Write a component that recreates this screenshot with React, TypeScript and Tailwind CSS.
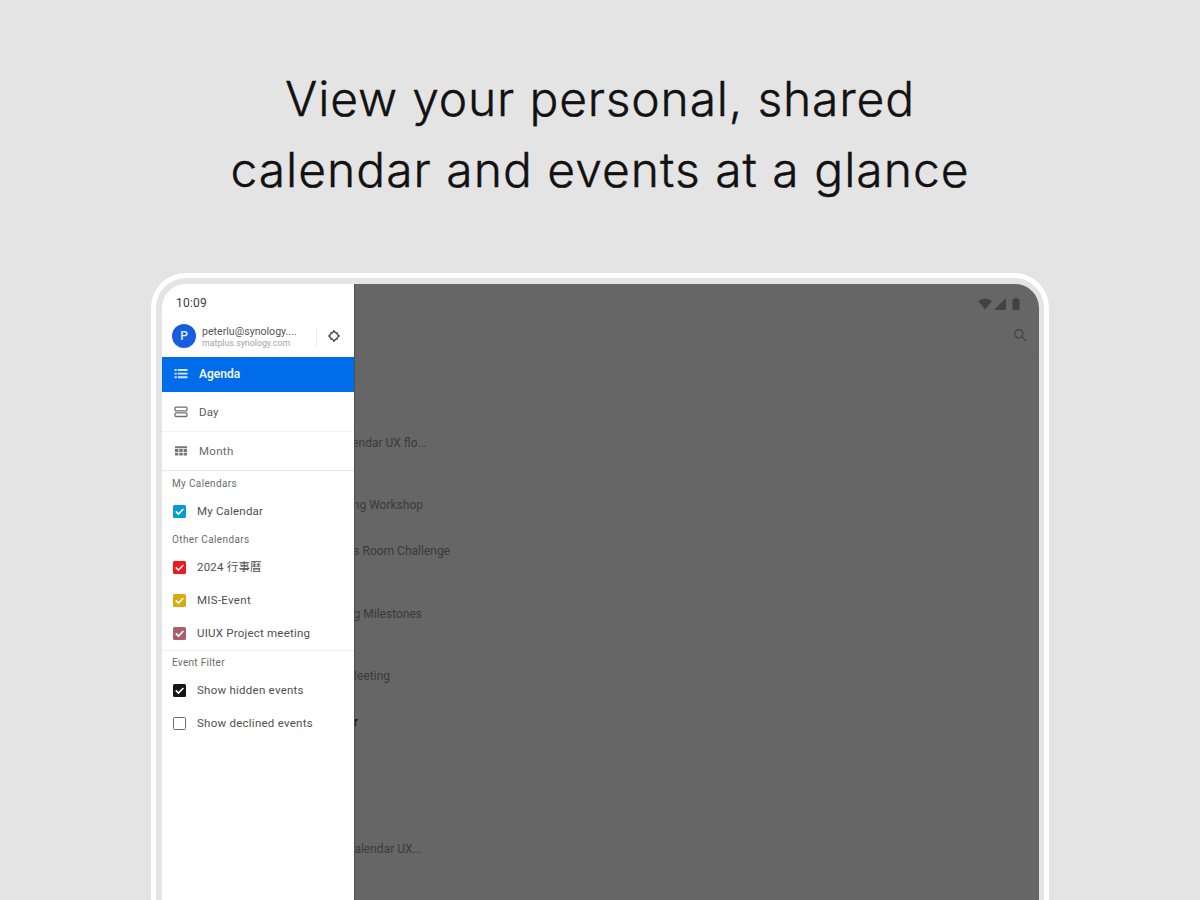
import React from "react";

type Calendar = { name: string; box: string; text: string };

const others: Calendar[] = [
  { name: "2024 行事曆", box: "bg-[#f3161c]", text: "tracking-[0.2px]" },
  { name: "MIS-Event", box: "bg-[#d9ab0c]", text: "tracking-[0.3px]" },
  { name: "UIUX Project meeting", box: "bg-[#a8616a]", text: "tracking-[0.22px]" },
];

function CheckBox({ color }: { color: string }) {
  return (
    <span className={`-mt-px flex size-[13px] shrink-0 items-center justify-center rounded-[1.5px] ${color}`}>
      <svg viewBox="0 0 13 13" className="size-[13px]" fill="none" stroke="white" strokeWidth="1.6">
        <path d="M2.8 6.4 5.4 9 10.4 4" />
      </svg>
    </span>
  );
}

function CheckRow({ item }: { item: Calendar }) {
  return (
    <div className="flex h-[33px] items-center pl-[11px]">
      <CheckBox color={item.box} />
      <span className={`ml-[11px] text-[11.5px] whitespace-nowrap text-[#505050] ${item.text}`}>{item.name}</span>
    </div>
  );
}

function SectionTitle({ children, className }: { children: string; className: string }) {
  return (
    <div className={`flex items-center pl-[10px] text-[10px] text-[#6b6b6b] ${className}`}>{children}</div>
  );
}

function Drawer() {
  return (
    <aside className="flex w-[192px] shrink-0 flex-col bg-white">
      <div className="flex h-[35px] items-center pt-[3px] pl-[14px] text-[12px] tracking-[0.2px] text-[#404040]">10:09</div>
      <div className="flex h-[38px] items-center pl-[10px]">
        <span className="-mt-[4px] flex size-[24px] shrink-0 items-center justify-center rounded-full bg-[#155fdf] text-[12px] font-medium text-[#e4eeff]">
          P
        </span>
        <div className="-mt-[3px] ml-[6px] w-[114px] whitespace-nowrap">
          <div className="text-[10.6px] leading-[12px] text-[#555]">peterlu@synology....</div>
          <div className="text-[8.8px] leading-[10px] text-[#a3a3a3]">matplus.synology.com</div>
        </div>
        <span className="-mt-[2px] h-[18px] w-px bg-[#eee]" />
        <svg viewBox="0 0 14 14" className="-mt-[4px] ml-[10px] size-[14px]" fill="none" stroke="#3c3c3c" strokeWidth="1.3">
          <path d="M7 1.8 8.7 3.9H10.1V5.3L12.2 7 10.1 8.7V10.1H8.7L7 12.2 5.3 10.1H3.9V8.7L1.8 7 3.9 5.3V3.9H5.3z" />
        </svg>
      </div>
      <div className="flex h-[35px] items-center bg-[#006ce9] pl-[12px] text-[#f0f6ff]">
        <svg viewBox="0 0 14 12" className="-mt-px w-[14px]" stroke="#d5e7ff" strokeWidth="1.9">
          <path d="M0.5 2h2.2M3.7 2H13.5M0.5 5.6h2.2M3.7 5.6H13.5M0.5 9.2h2.2M3.7 9.2H13.5" />
        </svg>
        <span className="-mt-[2px] ml-[11px] text-[12px] font-semibold">Agenda</span>
      </div>
      <div className="flex h-[40px] items-center border-b border-[#f3f3f3] pl-[12px]">
        <svg viewBox="0 0 14 12" className="w-[14px]" fill="none" stroke="#707070" strokeWidth="1.3">
          <rect x="1" y="1.2" width="12" height="3.7" rx="1" />
          <rect x="1" y="6.8" width="12" height="3.7" rx="1" />
        </svg>
        <span className="mt-[2px] ml-[11px] text-[11.5px] tracking-[0.2px] text-[#5a5a5a]">Day</span>
      </div>
      <div className="flex h-[39px] items-center border-b border-[#e9e9e9] pl-[12px]">
        <svg viewBox="0 0 14 12" className="w-[14px]" fill="#777">
          <path d="M1 1.2h12v2H1zM1 4h3.4v2.9H1zM5.3 4h3.4v2.9H5.3zM9.6 4H13v2.9H9.6zM1 7.8h3.4v2.7H1zM5.3 7.8h3.4v2.7H5.3zM9.6 7.8H13v2.7H9.6z" />
        </svg>
        <span className="mt-[2px] ml-[11px] text-[11.5px] tracking-[0.3px] text-[#6b6b6b]">Month</span>
      </div>
      <SectionTitle className="h-[24px] tracking-[0.35px]">My Calendars</SectionTitle>
      <CheckRow item={{ name: "My Calendar", box: "bg-[#079bd6]", text: "tracking-[0.2px]" }} />
      <SectionTitle className="h-[23px] tracking-[0.4px]">Other Calendars</SectionTitle>
      {others.map((item) => (
        <CheckRow key={item.name} item={item} />
      ))}
      <div className="border-t border-[#eee]" />
      <SectionTitle className="h-[23px] tracking-[0.3px]">Event Filter</SectionTitle>
      <CheckRow item={{ name: "Show hidden events", box: "bg-[#161616]", text: "tracking-[0.25px]" }} />
      <div className="flex h-[33px] items-center pl-[11px]">
        <span className="-mt-px size-[13px] rounded-[1.5px] border-[1.5px] border-[#6b6b6b]" />
        <span className="ml-[11px] text-[11.5px] tracking-[0.25px] whitespace-nowrap text-[#505050]">Show declined events</span>
      </div>
    </aside>
  );
}

function EventText({ children, className }: { children: string; className: string }) {
  return (
    <div className={`flex items-center justify-end text-[12px] whitespace-nowrap ${className}`}>
      {children}
    </div>
  );
}

function DimmedAgenda() {
  return (
    <main className="flex min-w-0 flex-1 flex-col overflow-hidden border-l border-[#505050] bg-[#666] text-[#3a3a3a]">
      <div className="flex h-[40px] items-center justify-end gap-[2px] pr-[19px]">
        <svg viewBox="0 0 14 12" className="w-[14px]" fill="#424242">
          <path d="M0 3Q7-2 14 3L7 11.5z" />
        </svg>
        <svg viewBox="0 0 12 12" className="w-[12px]" fill="#424242">
          <path d="M12 0v12H0z" />
        </svg>
        <svg viewBox="0 0 8 12" className="ml-[4px] w-[8px]" fill="#424242">
          <path d="M0.5 1H2.5V0h3v1h2v11h-7z" />
        </svg>
      </div>
      <div className="flex h-[32px] justify-end border-b border-[#636363] pt-[4px] pr-[12px]">
        <svg viewBox="0 0 14 14" className="size-[14px]" fill="none" stroke="#454545" strokeWidth="1.4">
          <circle cx="5.8" cy="5.8" r="4.1" />
          <path d="m9 9 4 4" />
        </svg>
      </div>
      <EventText className="mt-[71px] h-[32px] w-[72px]">endar UX flo...</EventText>
      <EventText className="mt-[30px] h-[32px] w-[68px]">ng Workshop</EventText>
      <EventText className="mt-[14px] h-[32px] w-[95px]">s Room Challenge</EventText>
      <EventText className="mt-[31px] h-[32px] w-[67px]">g Milestones</EventText>
      <EventText className="mt-[30px] h-[32px] w-[35px]">Meeting</EventText>
      <EventText className="mt-[14px] h-[32px] w-[3px] font-bold text-[#151515]">r</EventText>
      <div className="mt-[33px] ml-[331px] h-px w-[275px] bg-[#626262]" />
      <EventText className="mt-[61px] h-[32px] w-[67px]">alendar UX...</EventText>
    </main>
  );
}

export default function App() {
  return (
    <div className="flex h-[900px] w-[1200px] flex-col items-center overflow-hidden bg-[#e4e4e4] font-[Roboto,'Noto_Sans_CJK_TC',sans-serif]">
      <h1 className="mt-[63px] h-[210px] shrink-0 text-center font-[Inter,sans-serif] text-[48px] leading-[71px] font-light whitespace-nowrap text-[#111] [-webkit-text-stroke:0.4px_#111]">
        <span className="tracking-[0.8px]">View your personal, shared</span>
        <br />
        <span className="tracking-[1px]">calendar and events at a glance</span>
      </h1>
      <div className="h-[700px] w-[898px] shrink-0 rounded-[35px] border-[5px] border-white bg-[#e4e4e4] pt-[6px] pr-[5px] pl-[6px]">
        <div className="flex h-[680px] overflow-hidden rounded-[24px]">
          <Drawer />
          <DimmedAgenda />
        </div>
      </div>
    </div>
  );
}
